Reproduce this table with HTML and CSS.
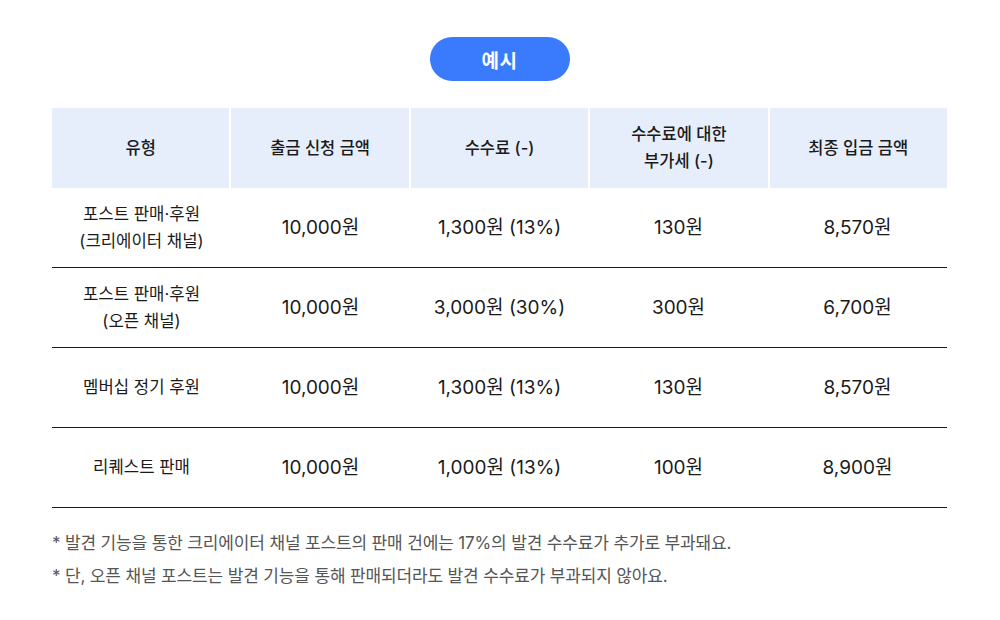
FILE: index.html
```html
<!DOCTYPE html>
<html lang="ko">
<head>
<meta charset="utf-8">
<link rel="stylesheet" href="styles.css">
</head>
<body>
<div class="page">
  <div class="badge-row"><span class="badge">예시</span></div>
  <div class="table">
    <div class="row head">
      <div class="cell">유형</div>
      <div class="cell">출금 신청 금액</div>
      <div class="cell">수수료 (-)</div>
      <div class="cell">수수료에 대한<br>부가세 (-)</div>
      <div class="cell">최종 입금 금액</div>
    </div>
    <div class="row body">
      <div class="cell type">포스트 판매·후원<br>(크리에이터 채널)</div>
      <div class="cell">10,000원</div>
      <div class="cell">1,300원 (13%)</div>
      <div class="cell">130원</div>
      <div class="cell">8,570원</div>
    </div>
    <div class="row body">
      <div class="cell type">포스트 판매·후원<br>(오픈 채널)</div>
      <div class="cell">10,000원</div>
      <div class="cell">3,000원 (30%)</div>
      <div class="cell">300원</div>
      <div class="cell">6,700원</div>
    </div>
    <div class="row body">
      <div class="cell type">멤버십 정기 후원</div>
      <div class="cell">10,000원</div>
      <div class="cell">1,300원 (13%)</div>
      <div class="cell">130원</div>
      <div class="cell">8,570원</div>
    </div>
    <div class="row body">
      <div class="cell type">리퀘스트 판매</div>
      <div class="cell">10,000원</div>
      <div class="cell">1,000원 (13%)</div>
      <div class="cell">100원</div>
      <div class="cell">8,900원</div>
    </div>
  </div>
  <ul class="notes">
    <li>* 발견 기능을 통한 크리에이터 채널 포스트의 판매 건에는 17%의 발견 수수료가 추가로 부과돼요.</li>
    <li>* 단, 오픈 채널 포스트는 발견 기능을 통해 판매되더라도 발견 수수료가 부과되지 않아요.</li>
  </ul>
</div>
</body>
</html>
```

FILE: styles.css
```css
* { box-sizing: border-box; }
html, body { margin: 0; padding: 0; background: #ffffff; }
body {
  font-family: "Inter", "Noto Sans CJK KR", "Noto Sans", sans-serif;
  color: #1a1a1a;
}
.page {
  width: 1000px;
  padding: 37px 53px 0 52px;
}
.badge-row {
  display: flex;
  justify-content: center;
}
.badge {
  display: flex;
  align-items: center;
  justify-content: center;
  width: 140px;
  height: 44px;
  border-radius: 22px;
  background: #3a7bfd;
  color: #ffffff;
  font-size: 19px;
  font-weight: 700;
  letter-spacing: 0.5px;
}
.table {
  margin-top: 27px;
  width: 895px;
}
.row {
  display: grid;
  grid-template-columns: repeat(5, 1fr);
  height: 80px;
}
.row.head {
  column-gap: 2px;
}
.row.head .cell {
  background: #e6eefb;
  font-size: 16.5px;
  font-weight: 500;
  line-height: 27px;
  color: #1a1a1a;
}
.row.body {
  border-bottom: 1px solid #1a1a1a;
}
.cell {
  display: flex;
  align-items: center;
  justify-content: center;
  text-align: center;
  font-size: 19px;
  line-height: 26px;
  color: #1a1a1a;
}
.cell.type {
  font-size: 16.7px;
  line-height: 27px;
}
.notes {
  list-style: none;
  margin: 19px 0 0 0;
  padding: 0;
  color: #555555;
  font-size: 17px;
  letter-spacing: -0.15px;
  line-height: 33px;
}
```
